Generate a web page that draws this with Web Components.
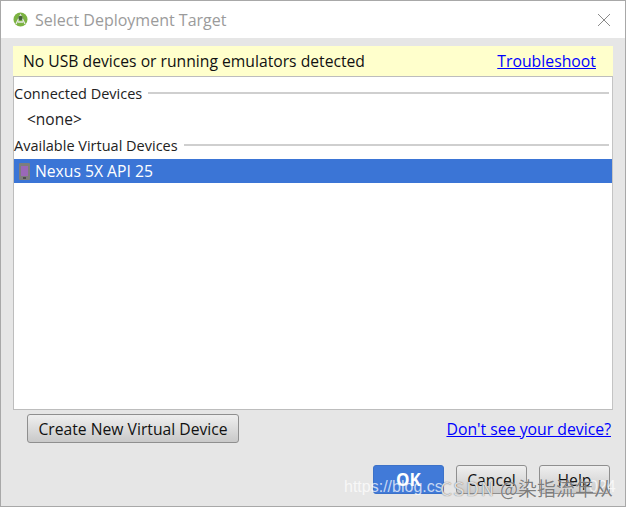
<!DOCTYPE html>
<html>
<head>
<meta charset="utf-8">
<style>
  html, body { margin: 0; height: 100%; }
  body { font-family: "Open Sans", "Noto Sans CJK SC", sans-serif; }
</style>
</head>
<body>
<deploy-dialog>
  <section-label>Connected Devices</section-label>
  <device-row empty>&lt;none&gt;</device-row>
  <section-label>Available Virtual Devices</section-label>
  <device-row selected>Nexus 5X API 25</device-row>
</deploy-dialog>
<script>
class DialogButton extends HTMLElement {
  constructor() {
    super();
    this.attachShadow({ mode: 'open' });
    this.shadowRoot.innerHTML = `
<style>
  :host {
    display: flex;
    align-items: center;
    justify-content: center;
    box-sizing: border-box;
    width: 212px;
    height: 29px;
    border: 1px solid #8f8f8f;
    border-radius: 3px;
    background: linear-gradient(#efefef, #c9c9c9);
    color: #111;
    font-size: 15.7px;
  }
  :host([primary]) {
    background: #417ad8;
    border-color: #3d72c8;
    color: #fff;
    font-weight: 700;
    font-size: 17px;
  }
  :host([wide]) { width: 71px; }
</style>
<slot></slot>`;
  }
}

class SectionLabel extends HTMLElement {
  constructor() {
    super();
    this.attachShadow({ mode: 'open' });
    this.shadowRoot.innerHTML = `
<style>
  :host {
    display: flex;
    align-items: center;
    gap: 6px;
    height: 26px;
    padding-right: 3px;
    font-size: 14.5px;
    color: #222;
  }
  i { flex: 1; height: 2px; background: #cfcfcf; }
</style>
<slot></slot><i></i>`;
  }
}

class DeviceRow extends HTMLElement {
  constructor() {
    super();
    this.attachShadow({ mode: 'open' });
    const icon = this.hasAttribute('selected') ? `
<svg width="11" height="17" viewBox="0 0 11 17">
  <rect width="11" height="17" rx="1" fill="#7d7d7d"/>
  <rect x="2" y="3" width="7" height="10" fill="#9a68b8"/>
  <rect x="4" y="14.5" width="3" height="1" fill="#222"/>
</svg>` : '';
    this.shadowRoot.innerHTML = `
<style>
  :host {
    display: flex;
    align-items: center;
    gap: 5px;
    height: 24px;
    padding-left: 5px;
    font-size: 15.7px;
    color: #222;
  }
  :host([selected]) { background: #3b75d6; color: #fff; margin-top: 1px; }
  :host([empty]) { height: 26px; padding-left: 13px; font-size: 15.5px; }
</style>
${icon}<slot></slot>`;
  }
}

class DeployDialog extends HTMLElement {
  constructor() {
    super();
    this.attachShadow({ mode: 'open' });
    this.shadowRoot.innerHTML = `
<style>
  :host {
    display: flex;
    flex-direction: column;
    position: relative;
    box-sizing: border-box;
    width: 626px;
    height: 507px;
    border: 1px solid #a8a8a8;
    background: #e6e6e6;
    overflow: hidden;
  }
  .title {
    display: flex;
    align-items: center;
    gap: 7px;
    height: 37px;
    padding: 0 14px 0 12px;
    background: #fff;
    color: #9b9b9b;
    font-size: 16px;
  }
  .title span { flex: 1; }
  .body { flex: 1; display: flex; flex-direction: column; padding: 8px 12px 0; }
  .banner {
    display: flex;
    justify-content: space-between;
    align-items: center;
    height: 30px;
    padding: 0 17px 0 10px;
    background: #ffffcc;
    font-size: 15.7px;
    color: #111;
  }
  a { color: #0000ff; text-decoration: underline; font-size: 15.8px; }
  .list {
    box-sizing: border-box;
    height: 334px;
    padding-top: 3px;
    background: #fff;
    border: 1px solid #bdbdbd;
    border-right-color: #c4c4c4;
  }
  .actions {
    display: flex;
    justify-content: space-between;
    align-items: center;
    height: 37px;
    padding: 0 2px 0 14px;
  }
  .footer { display: flex; justify-content: flex-end; gap: 12px; margin-top: 18px; padding-right: 3px; }
  .url {
    position: absolute;
    left: 343px;
    top: 477px;
    color: rgba(255,255,255,.72);
    font: 16px "Liberation Sans", sans-serif;
    white-space: nowrap;
  }
  .url.tail { left: 588px; }
  .author {
    position: absolute;
    left: 439px;
    top: 473px;
    color: rgba(85,85,85,.75);
    font: 400 19px "Noto Sans CJK SC", sans-serif;
    text-shadow: 0 0 1px rgba(255,255,255,.9);
    white-space: nowrap;
  }
  .author span {
    color: rgba(255,255,255,.8);
    letter-spacing: 1.5px;
    text-shadow: 0 0 1px rgba(60,60,60,.9);
  }
</style>
<div class="title">
  <svg width="15" height="15" viewBox="0 0 15 15">
    <circle cx="7.5" cy="7.5" r="7" fill="#7cb342"/>
    <path d="M3 12 L7.5 3 L12 12 M5 10 H10" fill="none" stroke="#e9e9e9" stroke-width="1.3"/>
    <circle cx="7.5" cy="6" r="2.2" fill="#44603a"/>
  </svg>
  <span>Select Deployment Target</span>
  <svg width="14" height="14" viewBox="0 0 14 14">
    <path d="M1 1 L13 13 M13 1 L1 13" stroke="#8a8a8a" stroke-width="1" fill="none"/>
  </svg>
</div>
<div class="body">
  <div class="banner"><span>No USB devices or running emulators detected</span><a>Troubleshoot</a></div>
  <div class="list"><slot></slot></div>
  <div class="actions">
    <dialog-button>Create New Virtual Device</dialog-button>
    <a>Don't see your device?</a>
  </div>
  <div class="footer">
    <dialog-button primary wide>OK</dialog-button>
    <dialog-button wide>Cancel</dialog-button>
    <dialog-button wide>Help</dialog-button>
  </div>
</div>
<div class="url">https://blog.cs</div>
<div class="url tail">024</div>
<div class="author"><span>CSDN</span> @染指流年从</div>`;
  }
}

customElements.define('dialog-button', DialogButton);
customElements.define('section-label', SectionLabel);
customElements.define('device-row', DeviceRow);
customElements.define('deploy-dialog', DeployDialog);
</script>
</body>
</html>
